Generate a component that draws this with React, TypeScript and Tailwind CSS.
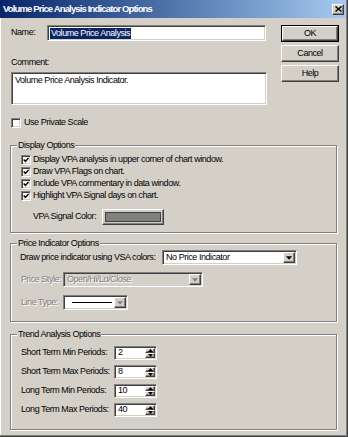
import type { ReactNode } from "react";

const sunken =
  "border border-t-[#808080] border-l-[#808080] border-b-white border-r-white shadow-[inset_1px_1px_0_#404040,inset_-1px_-1px_0_#d4d0c8]";
const raised =
  "border border-t-white border-l-white border-b-[#404040] border-r-[#404040] shadow-[inset_-1px_-1px_0_#808080] bg-[#d4d0c8]";
const disabledText = "text-[#808080] [text-shadow:1px_1px_0_#fff]";

function Check({ checked }: { checked?: boolean }) {
  return (
    <div className={`${sunken} flex h-[10px] w-[10px] shrink-0 items-center justify-center bg-white`}>
      {checked && (
        <svg width="6" height="6" viewBox="0 0 7 7">
          <path d="M0.8 3 L2.8 5.2 L6.4 1" fill="none" stroke="#000" strokeWidth="1.7" />
        </svg>
      )}
    </div>
  );
}

function Arrow({ disabled }: { disabled?: boolean }) {
  return (
    <div className={`${raised} flex h-full w-[12px] shrink-0 items-center justify-center`}>
      <svg width="6" height="4" viewBox="0 0 7 4">
        <polygon points="0,0 7,0 3.5,4" fill={disabled ? "#808080" : "#000"} />
      </svg>
    </div>
  );
}

function Combo({
  width,
  disabled,
  white,
  children,
}: {
  width: string;
  disabled?: boolean;
  white?: boolean;
  children: ReactNode;
}) {
  return (
    <div className={`${sunken} ${width} ${white ? "bg-white" : "bg-[#d4d0c8]"} flex h-[15px] p-[1px]`}>
      <div className={`flex flex-1 items-center pl-[2px] ${disabled ? disabledText : ""}`}>{children}</div>
      <Arrow disabled={disabled} />
    </div>
  );
}

function Group({ title, className, children }: { title: string; className: string; children: ReactNode }) {
  return (
    <div
      className={`relative ml-[10px] w-[327px] border border-[#808080] shadow-[inset_1px_1px_0_#fff,1px_1px_0_#fff] ${className}`}
    >
      <span className="absolute -top-[7px] left-[6px] bg-[#d4d0c8] px-[1px] leading-[12px]">{title}</span>
      {children}
    </div>
  );
}

function Button({ label, isDefault }: { label: string; isDefault?: boolean }) {
  const inner = (
    <div className={`${raised} flex h-full w-full items-center justify-center`}>{label}</div>
  );
  return isDefault ? (
    <div className="h-[17px] w-[58px] border border-black">{inner}</div>
  ) : (
    <div className="h-[17px] w-[58px]">{inner}</div>
  );
}

function Spin({ value }: { value: string }) {
  return (
    <div className={`${sunken} flex h-[14px] w-[43px] bg-white p-[1px]`}>
      <div className="flex flex-1 items-center pl-[2px]">{value}</div>
      <div className="flex w-[10px] flex-col">
        <div className={`${raised} flex h-1/2 items-center justify-center`}>
          <svg width="5" height="3" viewBox="0 0 5 3">
            <polygon points="0,3 5,3 2.5,0" fill="#000" />
          </svg>
        </div>
        <div className={`${raised} flex h-1/2 items-center justify-center`}>
          <svg width="5" height="3" viewBox="0 0 5 3">
            <polygon points="0,0 5,0 2.5,3" fill="#000" />
          </svg>
        </div>
      </div>
    </div>
  );
}

const displayOptions = [
  "Display VPA analysis in upper corner of chart window.",
  "Draw VPA Flags on chart.",
  "Include VPA commentary in data window.",
  "Highlight VPA Signal days on chart.",
];

const trendRows = [
  { label: "Short Term Min Periods:", value: "2" },
  { label: "Short Term Max Periods:", value: "8" },
  { label: "Long Term Min Periods:", value: "10" },
  { label: "Long Term Max Periods:", value: "40" },
];

export default function App() {
  return (
    <div className="flex h-[437px] w-[348px] flex-col border-r border-b border-[#404040] bg-[#d4d0c8] font-['Liberation_Sans',Arial,sans-serif] text-[9px] tracking-[-0.45px] whitespace-nowrap text-black shadow-[inset_-1px_-1px_0_#808080,inset_1px_0_0_#fff]">
      {/* title bar */}
      <div className="mr-[1px] flex h-[18px] items-center justify-between bg-linear-to-r from-[#0a246a] to-[#a6caf0] pr-[2px] pl-[3px]">
        <span className="text-[9.5px] font-bold tracking-[-0.85px] text-white">Volume Price Analysis Indicator Options</span>
        <div className={`${raised} flex h-[11px] w-[12px] items-center justify-center`}>
          <svg width="7" height="6" viewBox="0 0 7 6">
            <path d="M0.5 0.5 L6.5 5.5 M6.5 0.5 L0.5 5.5" stroke="#000" strokeWidth="1.5" />
          </svg>
        </div>
      </div>

      {/* top section */}
      <div className="mt-[7px] flex">
        <div className="ml-[11px] flex w-[256px] flex-col">
          <div className="flex h-[16px] items-center">
            <span className="w-[36px]">Name:</span>
            <div className={`${sunken} flex h-[16px] w-[219px] items-center bg-white pl-[2px]`}>
              <span className="bg-[#0a246a] px-[1px] leading-[11px] text-white">Volume Price Analysis</span>
            </div>
          </div>
          <span className="mt-[15px] leading-[12px]">Comment:</span>
          <div className={`${sunken} mt-[4px] h-[33px] w-[256px] bg-white pt-[1px] pl-[3px] leading-[12px]`}>
            Volume Price Analysis Indicator.
          </div>
          <div className="mt-[13px] flex h-[10px] items-center gap-[3px]">
            <Check />
            <span>Use Private Scale</span>
          </div>
        </div>
        <div className="ml-[14px] flex flex-col gap-[3px]">
          <Button label="OK" isDefault />
          <Button label="Cancel" />
          <Button label="Help" />
        </div>
      </div>

      <Group title="Display Options" className="mt-[17px] h-[88px] pt-[8px]">
        {displayOptions.map((text) => (
          <div key={text} className="flex h-[12px] items-center gap-[2px] pl-[10px]">
            <Check checked />
            <span>{text}</span>
          </div>
        ))}
        <div className="mt-[7px] flex h-[16px] items-center pl-[22px]">
          <span className="w-[69px]">VPA Signal Color:</span>
          <div className={`${raised} h-[16px] w-[62px] p-[2px]`}>
            <div className="h-full w-full border border-[#404040] bg-[#808080]" />
          </div>
        </div>
      </Group>

      <Group title="Price Indicator Options" className="mt-[10px] h-[79px] pt-[6px]">
        <div className="flex h-[15px] items-center pl-[9px]">
          <span className="w-[142px]">Draw price indicator using VSA colors:</span>
          <Combo width="w-[135px]" white>
            No Price Indicator
          </Combo>
        </div>
        <div className="mt-[7px] flex h-[15px] items-center pl-[10px]">
          <span className={`w-[42px] ${disabledText}`}>Price Style:</span>
          <Combo width="w-[140px]" disabled>
            Open/Hi/Lo/Close
          </Combo>
        </div>
        <div className="mt-[8px] flex h-[15px] items-center pl-[10px]">
          <span className={`w-[42px] ${disabledText}`}>Line Type:</span>
          <Combo width="w-[65px]" white disabled>
            <div className="ml-[5px] h-px w-[40px] bg-black" />
          </Combo>
        </div>
      </Group>

      <Group title="Trend Analysis Options" className="mt-[12px] flex h-[96px] flex-col gap-[5px] pt-[11px]">
        {trendRows.map((row) => (
          <div key={row.label} className="flex h-[14px] items-center pl-[10px]">
            <span className="w-[93px]">{row.label}</span>
            <Spin value={row.value} />
          </div>
        ))}
      </Group>
    </div>
  );
}
